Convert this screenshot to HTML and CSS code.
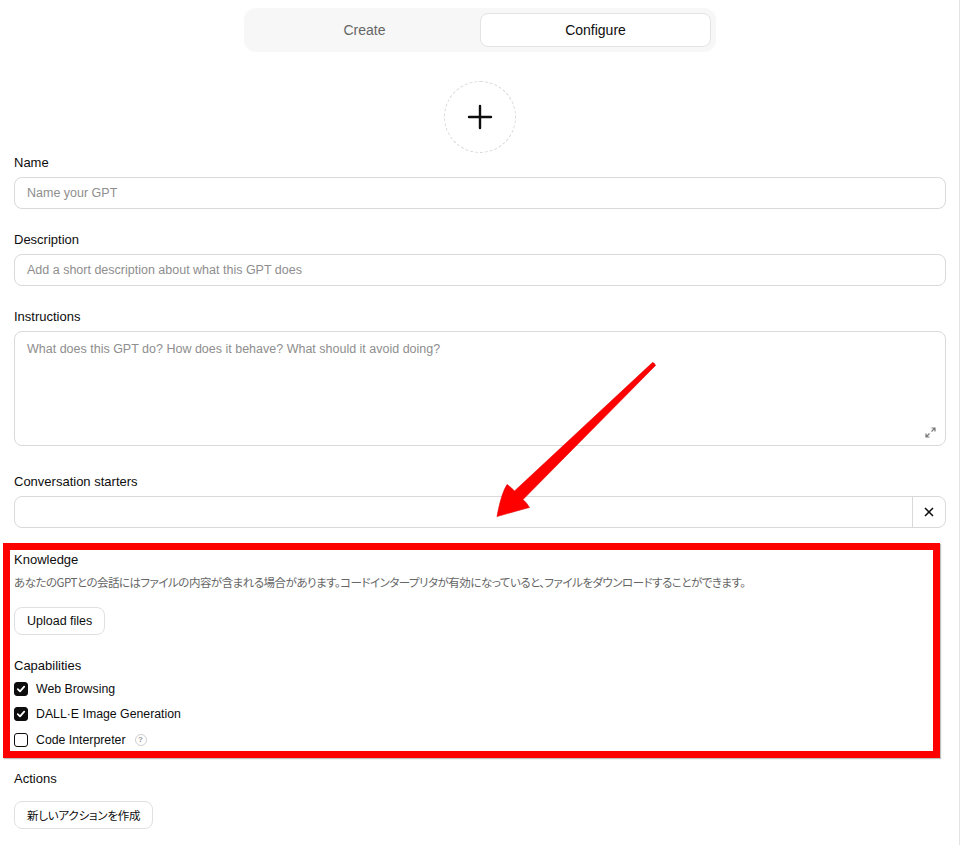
FILE: index.html
```html
<!DOCTYPE html>
<html lang="ja">
<head>
<meta charset="utf-8">
<title>Configure GPT</title>
<link rel="stylesheet" href="styles.css">
</head>
<body>
<div class="page">
  <div class="tabs">
    <div class="tab">Create</div>
    <div class="tab active">Configure</div>
  </div>

  <div class="avatar-row">
    <div class="avatar">
      <svg width="26" height="26" viewBox="0 0 26 26"><path d="M13 2v22M2 13h22" stroke="#0d0d0d" stroke-width="2.4" stroke-linecap="round" fill="none"/></svg>
    </div>
  </div>

  <div class="field">
    <div class="label">Name</div>
    <div class="input"><span class="ph">Name your GPT</span></div>
  </div>

  <div class="field">
    <div class="label">Description</div>
    <div class="input"><span class="ph">Add a short description about what this GPT does</span></div>
  </div>

  <div class="field">
    <div class="label">Instructions</div>
    <div class="textarea">
      <span class="ph">What does this GPT do? How does it behave? What should it avoid doing?</span>
      <svg class="expand" width="11" height="11" viewBox="0 0 11 11"><path d="M6.5 1h3.5v3.5M10 1L6.5 4.5M4.5 10H1V6.5M1 10l3.5-3.5" stroke="#777" stroke-width="1.2" fill="none"/></svg>
    </div>
  </div>

  <div class="field starters">
    <div class="label">Conversation starters</div>
    <div class="input split">
      <div class="grow"></div>
      <div class="xbtn"><svg width="10" height="10" viewBox="0 0 10 10"><path d="M1 1l8 8M9 1L1 9" stroke="#0d0d0d" stroke-width="1.5" fill="none"/></svg></div>
    </div>
  </div>

  <div class="section knowledge">
    <div class="label">Knowledge</div>
    <div class="desc">あなたのGPTとの会話にはファイルの内容が含まれる場合があります。コードインタープリタが有効になっていると、ファイルをダウンロードすることができます。</div>
    <div class="btn">Upload files</div>
  </div>

  <div class="section caps">
    <div class="label">Capabilities</div>
    <div class="check-row"><span class="box on"><svg width="10" height="10" viewBox="0 0 10 10"><path d="M1.8 5.2l2.2 2.2 4.2-4.8" stroke="#fff" stroke-width="1.8" fill="none" stroke-linecap="round" stroke-linejoin="round"/></svg></span><span>Web Browsing</span></div>
    <div class="check-row"><span class="box on"><svg width="10" height="10" viewBox="0 0 10 10"><path d="M1.8 5.2l2.2 2.2 4.2-4.8" stroke="#fff" stroke-width="1.8" fill="none" stroke-linecap="round" stroke-linejoin="round"/></svg></span><span>DALL·E Image Generation</span></div>
    <div class="check-row"><span class="box"></span><span>Code Interpreter</span><span class="help">?</span></div>
  </div>

  <div class="section actions">
    <div class="label">Actions</div>
    <div class="btn jp">新しいアクションを作成</div>
  </div>
</div>

<div class="highlight"></div>
<svg class="arrow" width="961" height="845" viewBox="0 0 961 845">
  <path d="M655.5 365.5 L523 499.5 Q527 503 529.5 507.5 Q520 510 497 516.5 Q501 494 507 484.5 Q511 487 514.5 491 L652.5 362.5 Q654.5 362.5 655.5 365.5 Z" fill="#ff0000" stroke="#e00000" stroke-width="0.6"/>
</svg>
</body>
</html>
```

FILE: styles.css
```css
html, body {
  margin: 0;
  padding: 0;
  background: #ffffff;
}

body {
  font-family: "Liberation Sans", Arial, "Noto Sans CJK JP", sans-serif;
  font-size: 13px;
  color: #0d0d0d;
  position: relative;
  width: 961px;
  height: 845px;
  overflow: hidden;
}

.page {
  box-sizing: border-box;
  width: 960px;
  min-height: 845px;
  padding: 8px 13px 0 14px;
  border-right: 1px solid #e3e3e3;
}

.tabs {
  width: 472px;
  height: 44px;
  box-sizing: border-box;
  margin: 0 auto;
  padding: 5px;
  background: #f7f7f7;
  border-radius: 12px;
  display: grid;
  grid-template-columns: 1fr 1fr;
}

.tab {
  display: flex;
  align-items: center;
  justify-content: center;
  font-size: 14px;
  color: #666666;
  border-radius: 8px;
}

.tab.active {
  background: #ffffff;
  color: #0d0d0d;
  border: 1px solid #e3e3e3;
}

.avatar-row {
  display: flex;
  justify-content: center;
  margin-top: 29px;
}

.avatar {
  width: 72px;
  height: 72px;
  box-sizing: border-box;
  border: 1px dashed #d6d6d6;
  border-radius: 50%;
  display: flex;
  align-items: center;
  justify-content: center;
}

.label {
  line-height: 20px;
  height: 20px;
  font-size: 13px;
  color: #0d0d0d;
}

.field {
  margin-top: 21px;
}

.avatar-row + .field {
  margin-top: 0;
}

.field .label {
  margin-bottom: 4px;
}

.field.starters {
  margin-top: 26px;
}

.input {
  box-sizing: border-box;
  height: 32px;
  border: 1px solid #d9d9d9;
  border-radius: 8px;
  display: flex;
  align-items: center;
  padding: 0 12px;
}

.ph {
  color: #8e8e8e;
  font-size: 12.5px;
}

.textarea {
  position: relative;
  box-sizing: border-box;
  height: 115px;
  border: 1px solid #d9d9d9;
  border-radius: 8px;
  padding: 7px 12px;
  line-height: 20px;
}

.expand {
  position: absolute;
  right: 9px;
  bottom: 7px;
}

.input.split {
  padding: 0;
}

.grow {
  flex: 1;
}

.xbtn {
  width: 32px;
  height: 100%;
  border-left: 1px solid #d9d9d9;
  display: flex;
  align-items: center;
  justify-content: center;
}

.knowledge {
  margin-top: 22px;
}

.desc {
  margin-top: 2px;
  line-height: 20px;
  font-family: "Noto Sans CJK JP", sans-serif;
  font-feature-settings: "palt";
  font-size: 11.5px;
  color: #666666;
  letter-spacing: -0.5px;
  white-space: nowrap;
}

.btn {
  display: inline-flex;
  align-items: center;
  box-sizing: border-box;
  height: 28px;
  padding: 0 12px;
  border: 1px solid #e0e0e0;
  border-radius: 8px;
  font-size: 12.5px;
  color: #0d0d0d;
}

.knowledge .btn {
  margin-top: 15px;
}

.btn.jp {
  font-family: "Noto Sans CJK JP", sans-serif;
  font-feature-settings: "palt";
  font-size: 11.5px;
  letter-spacing: -0.2px;
}

.caps {
  margin-top: 21px;
}

.check-row {
  height: 25.5px;
  display: flex;
  align-items: center;
  gap: 8px;
  font-size: 12.3px;
}

.box {
  box-sizing: border-box;
  width: 14px;
  height: 14px;
  border: 1px solid #0d0d0d;
  border-radius: 3px;
  display: flex;
  align-items: center;
  justify-content: center;
}

.box.on {
  background: #0d0d0d;
}

.help {
  box-sizing: border-box;
  width: 12px;
  height: 12px;
  border: 1px solid #cfcfcf;
  border-radius: 50%;
  font-size: 8px;
  font-weight: bold;
  color: #9a9a9a;
  display: flex;
  align-items: center;
  justify-content: center;
  margin-left: 1px;
}

.actions {
  margin-top: 16.5px;
}

.actions .btn {
  margin-top: 12px;
}

.highlight {
  position: absolute;
  left: 3px;
  top: 543px;
  width: 937px;
  height: 215px;
  box-sizing: border-box;
  border: 7px solid #ff0000;
  box-shadow: 1px 1px 1px rgba(0, 0, 0, 0.25);
}

.arrow {
  position: absolute;
  left: 0;
  top: 0;
  pointer-events: none;
}
```
